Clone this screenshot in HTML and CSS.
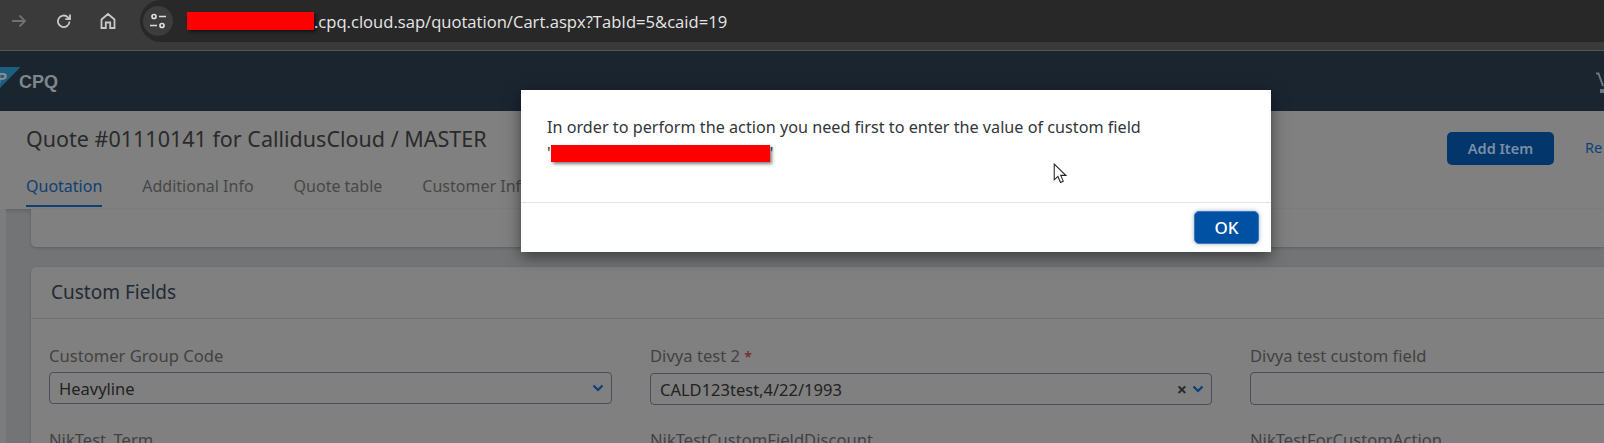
FILE: index.html
```html
<!DOCTYPE html>
<html lang="en">
<head>
<meta charset="utf-8">
<title>Quote</title>
<link rel="stylesheet" href="styles.css">
</head>
<body>
<div class="chrome">
  <svg class="ic ic-fwd" viewBox="0 0 20 20"><path d="M3 10h13M10.500 4.500 16 10l-5.500 5.500"/></svg>
  <svg class="ic ic-reload" viewBox="0 0 20 20"><path d="M15.500 10.500a5.800 5.800 0 1 1-1.700-4.300L16 8.200M16 3.500v4.700h-4.700"/></svg>
  <svg class="ic ic-home" viewBox="0 0 20 20"><path d="M3.500 17V8.500L10 3l6.500 5.500V17h-4.300v-5.500H7.800V17z"/></svg>
  <div class="omnibox">
    <span class="tune"><svg viewBox="0 0 20 20"><circle cx="6" cy="5.500" r="2"/><path d="M11 5.500h7M2 14.500h7"/><circle cx="14" cy="14.500" r="2"/></svg></span>
    <span class="url"><span class="url-mask"></span>.cpq.cloud.sap/quotation/Cart.aspx?TabId=5&amp;caid=19</span>
  </div>
</div>

<div class="app">
  <header class="nav">
    <svg class="logo" viewBox="0 0 21 22"><path d="M0 0H20.500L0 21z"/><text x="-3" y="16" class="logo-p">P</text></svg>
    <span class="brand">CPQ</span>
    <svg class="cart" viewBox="0 0 8 22"><path d="M0 1.500h2.500L7 14"/><rect x="4" y="17" width="4" height="4"/></svg>
  </header>
  <section class="sub">
    <div class="sub-main">
      <h1 class="quote-title">Quote #01110141 for CallidusCloud / MASTER</h1>
      <nav class="tabs">
        <span class="tab tab-on">Quotation</span>
        <span class="tab">Additional Info</span>
        <span class="tab">Quote table</span>
        <span class="tab">Customer Info</span>
      </nav>
    </div>
    <div class="sub-actions">
      <span class="btn-add">Add Item</span>
      <span class="link-re">Re</span>
    </div>
  </section>
  <main class="content">
    <div class="card card-top"></div>
    <div class="card card-fields">
      <div class="card-head">Custom Fields</div>
      <div class="fields">
        <div class="field">
          <label class="lbl">Customer Group Code</label>
          <div class="sel"><span class="val">Heavyline</span><svg class="chev" viewBox="0 0 12 8"><path d="M1.500 1.500 6 6l4.500-4.500"/></svg></div>
        </div>
        <div class="field">
          <label class="lbl">Divya test 2 <i class="req">*</i></label>
          <div class="sel"><span class="val">CALD123test,4/22/1993</span><span class="clear">×</span><svg class="chev" viewBox="0 0 12 8"><path d="M1.500 1.500 6 6l4.500-4.500"/></svg></div>
        </div>
        <div class="field">
          <label class="lbl">Divya test custom field</label>
          <div class="sel sel-open"></div>
        </div>
        <div class="field"><label class="lbl">NikTest_Term</label></div>
        <div class="field"><label class="lbl">NikTestCustomFieldDiscount</label></div>
        <div class="field"><label class="lbl">NikTestForCustomAction</label></div>
      </div>
    </div>
  </main>
</div>

<div class="dialog">
  <div class="dialog-body">
    <p class="msg">In order to perform the action you need first to enter the value of custom field<br>'<span class="mask"></span>'</p>
    <svg class="cursor" viewBox="0 0 13 20"><path d="M1 1v15l3.500-3.200L7 18.500l2.600-1.200L7.200 11.800H12z"/></svg>
  </div>
  <div class="dialog-foot"><button class="ok">OK</button></div>
</div>
</body>
</html>
```
FILE: styles.css
```css
* { box-sizing: border-box; }
html, body { margin: 0; height: 443px; overflow: hidden; }
body { font-family: "Noto Sans", "Open Sans", sans-serif; background: #727476; position: relative; width: 1604px; }

.chrome { height: 51px; background: #3a3a3a; border-bottom: 1px solid #555; display: flex; align-items: center; padding: 0 0 8px 9px; position: relative; }
.ic { width: 20px; height: 20px; fill: none; stroke: #c9c9c9; stroke-width: 1.8; flex: none; }
.ic-fwd { stroke: #707070; margin-right: 25px; }
.ic-reload { margin-right: 24px; }
.ic-home { margin-right: 22px; }
.omnibox { height: 42px; flex: 1; background: #282828; border-radius: 21px 0 0 21px; display: flex; align-items: center; padding-left: 3px; }
.tune { width: 30px; height: 30px; border-radius: 50%; background: #3c3c3c; display: flex; align-items: center; justify-content: center; margin-right: 14px; }
.tune svg { width: 20px; height: 20px; fill: none; stroke: #dcdcdc; stroke-width: 1.7; }
.url { color: #e6e6e6; font: 16.600px "Open Sans", "Noto Sans", sans-serif; display: flex; align-items: center; }
.url-mask { width: 127px; height: 18px; background: #fe0000; box-shadow: 2px 2px 3px rgba(0,0,0,.5); }

.app { display: flex; flex-direction: column; }
.nav { height: 60px; background: #1b2530; display: flex; align-items: center; position: relative; }
.logo { width: 21px; height: 22px; margin: 0 -2px 7px 0; flex: none; overflow: hidden; }
.logo path { fill: #1b5f80; }
.logo-p { fill: #8a8f94; font: bold 15px "Liberation Sans", sans-serif; }
.brand { color: #80868b; font: bold 18px "Liberation Sans", Arial, sans-serif; margin-top: 2px; }
.cart { width: 8px; height: 22px; margin-left: auto; margin-top: 3px; fill: #697583; flex: none; }
.cart path { fill: none; stroke: #697583; stroke-width: 2; }

.sub { height: 98px; background: #808080; display: flex; justify-content: space-between; box-shadow: 0 2px 4px rgba(0,0,0,.15); position: relative; padding-left: 26px; }
.quote-title { margin: 14px 0 0; font-size: 21.500px; font-weight: 400; color: #2a2a2a; line-height: 28px; white-space: nowrap; }
.tabs { display: flex; gap: 40px; margin-top: 22px; }
.tab { font-size: 16px; color: #474747; line-height: 22px; padding-bottom: 8px; border-bottom: 2px solid transparent; white-space: nowrap; }
.tab-on { color: #0f3f73; border-bottom-color: #0f3f73; }
.sub-actions { display: flex; align-items: flex-start; padding-top: 21px; gap: 31px; width: 157px; flex: none; overflow: hidden; }
.btn-add { width: 107px; height: 33px; flex: none; border-radius: 5px; background: #03376b; color: #7b8ea5; font-size: 14.500px; font-weight: 600; display: flex; align-items: center; justify-content: center; padding-bottom: 2px; }
.link-re { color: #0f3f73; font-size: 14.500px; line-height: 31px; }

.content { position: relative; border-left: 6px solid #7c7c7c; padding-left: 25px; }
.card { background: #808080; border-radius: 5px 0 0 5px; box-shadow: 0 1px 3px rgba(0,0,0,.2); }
.card-top { height: 38px; border-radius: 0 0 0 5px; }
.card-fields { margin-top: 20px; height: 200px; }
.card-head { height: 52px; padding: 0 0 0 20px; font-size: 19px; line-height: 50px; color: #222b33; border-bottom: 1px solid #727272; }
.fields { display: grid; grid-template-columns: 563px 562px 400px; column-gap: 38px; row-gap: 24px; padding: 26px 0 0 18px; }
.lbl { display: block; font-size: 16.600px; line-height: 22px; color: #424242; white-space: nowrap; }
.req { color: #6f1f1f; font-style: normal; font-size: 14px; }
.sel { margin-top: 5px; height: 32px; border: 1px solid #4a4e57; border-radius: 4px; display: flex; align-items: center; padding: 0 7px 0 9px; }
.sel-open { height: 33px; }
.val { font-size: 16.500px; color: #222; flex: 1; white-space: nowrap; }
.clear { font-size: 18px; font-weight: 700; color: #2a2a2a; margin-right: 5px; line-height: 1; }
.chev { width: 12px; height: 8px; fill: none; stroke: #0a3f80; stroke-width: 2.200; }

.dialog { position: absolute; left: 521px; top: 90px; width: 750px; height: 162px; background: #fff; box-shadow: 0 5px 15px rgba(0,0,0,.5); display: flex; flex-direction: column; }
.dialog-body { height: 113px; padding: 24px 25px 0 26px; border-bottom: 1px solid #e5e5e5; position: relative; }
.msg { margin: 0; font-size: 16.200px; line-height: 26px; color: #32363a; }
.mask { display: inline-block; width: 219px; height: 17px; background: #fe0000; vertical-align: -3px; box-shadow: 2px 2px 3px rgba(0,0,0,.5); }
.cursor { position: absolute; left: 532px; top: 73px; width: 14px; height: 21px; fill: #fff; stroke: #222; stroke-width: 1; }
.dialog-foot { flex: 1; display: flex; justify-content: flex-end; align-items: flex-start; padding: 8px 12px 0 0; }
.ok { width: 65px; height: 33px; background: #0051a3; border: 1px solid #3a78bb; border-radius: 5px; color: #fff; font: 500 17px "Noto Sans", sans-serif; box-shadow: 0 0 4px rgba(0,60,120,.4); }
```
